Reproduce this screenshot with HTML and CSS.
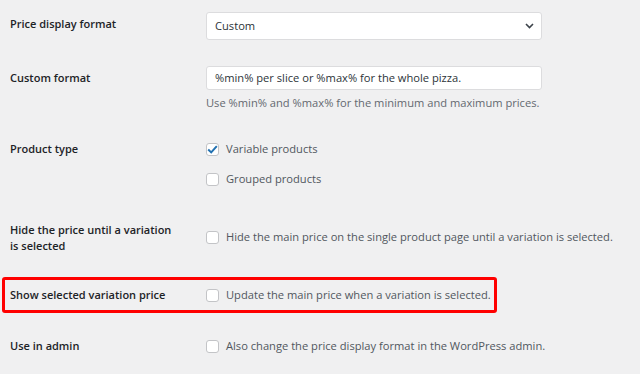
FILE: index.html
```html
<!DOCTYPE html>
<html>
<head>
<meta charset="utf-8">
<link rel="stylesheet" href="styles.css">
</head>
<body>
<div class="form">
  <div class="row r1">
    <div class="label pad4">Price display format</div>
    <div class="field">
      <div class="select">
        <span>Custom</span>
        <svg class="chev" width="9" height="6" viewBox="0 0 9 6"><path d="M1 1 L4.5 4.5 L8 1" fill="none" stroke="#3c434a" stroke-width="1.6"/></svg>
      </div>
    </div>
  </div>
  <div class="row r2">
    <div class="label pad4">Custom format</div>
    <div class="field">
      <div class="input">%min% per slice or %max% for the whole pizza.</div>
      <p class="desc">Use %min% and %max% for the minimum and maximum prices.</p>
    </div>
  </div>
  <div class="row r3">
    <div class="label">Product type</div>
    <div class="field checks">
      <label class="check"><span class="box checked"><svg width="11" height="9" viewBox="0 0 11 9"><path d="M1.2 4.6 L4.2 7.4 L9.8 1.2" fill="none" stroke="#2271b1" stroke-width="2"/></svg></span>Variable products</label>
      <label class="check"><span class="box"></span>Grouped products</label>
    </div>
  </div>
  <div class="row r4">
    <div class="label">Hide the price until a variation is selected</div>
    <div class="field mid">
      <label class="check"><span class="box"></span>Hide the main price on the single product page until a variation is selected.</label>
    </div>
  </div>
  <div class="row r5 highlight">
    <div class="label">Show selected variation price</div>
    <div class="field">
      <label class="check"><span class="box"></span>Update the main price when a variation is selected.</label>
    </div>
  </div>
  <div class="row r6">
    <div class="label">Use in admin</div>
    <div class="field">
      <label class="check"><span class="box"></span>Also change the price display format in the WordPress admin.</label>
    </div>
  </div>
</div>
</body>
</html>
```
FILE: styles.css
```css
html, body {
  margin: 0;
  padding: 0;
  background: #f0f0f1;
}
body {
  font-family: "Open Sans", "Noto Sans", sans-serif;
  font-size: 11.15px;
  line-height: 16px;
  color: #2c3338;
  width: 640px;
  height: 374px;
  overflow: hidden;
}
.row {
  display: grid;
  grid-template-columns: 170px 336px;
  column-gap: 26px;
  padding-left: 10px;
  position: relative;
}
.r1 { padding-top: 12px; }
.r2 { padding-top: 26px; }
.r3 { padding-top: 30px; }
.r4 { padding-top: 35px; }
.r5 { padding-top: 33px; }
.r6 { padding-top: 35px; }
.label {
  font-weight: 600;
  font-size: 11px;
  color: #1d2327;
}
.pad4 { padding-top: 4px; }
.select, .input {
  box-sizing: border-box;
  background: #fff;
  border: 1px solid #dcdcde;
  border-radius: 3px;
  padding: 0 7px 0 8px;
  display: flex;
  align-items: center;
  color: #2c3338;
}
.select {
  height: 28px;
  justify-content: space-between;
}
.input {
  height: 24px;
}
.desc {
  margin: 5px 0 0;
  color: #646970;
  white-space: nowrap;
}
.checks {
  display: flex;
  flex-direction: column;
  gap: 14px;
}
.mid { padding-top: 7px; }
.check {
  display: flex;
  align-items: center;
  gap: 7px;
  color: #50575e;
  white-space: nowrap;
}
.box {
  box-sizing: border-box;
  width: 13px;
  height: 13px;
  background: #fff;
  border: 1px solid #c3c4c7;
  border-radius: 3px;
  display: flex;
  align-items: center;
  justify-content: center;
  flex: none;
}
.highlight::after {
  content: "";
  position: absolute;
  left: 2px;
  top: 23px;
  width: 495px;
  height: 36px;
  box-sizing: border-box;
  border: 3.5px solid #ff0000;
  border-radius: 3px;
}
```
